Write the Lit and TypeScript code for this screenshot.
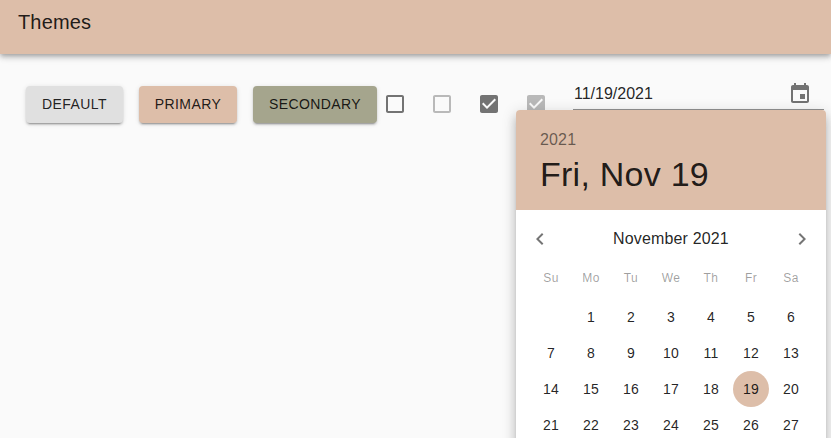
import { LitElement, html, css, svg, nothing } from "lit";
import { customElement, property } from "lit/decorators.js";

const ICONS = {
  unchecked: "M19 5v14H5V5h14m0-2H5c-1.1 0-2 .9-2 2v14c0 1.1.9 2 2 2h14c1.1 0 2-.9 2-2V5c0-1.1-.9-2-2-2z",
  checked: "M19 3H5c-1.11 0-2 .9-2 2v14c0 1.1.89 2 2 2h14c1.11 0 2-.9 2-2V5c0-1.1-.89-2-2-2zm-9 14l-5-5 1.41-1.41L10 14.17l7.59-7.59L19 8l-9 9z",
  event: "M17 12h-5v5h5v-5zM16 1v2H8V1H6v2H5c-1.11 0-1.99.9-1.99 2L3 19c0 1.1.89 2 2 2h14c1.1 0 2-.9 2-2V5c0-1.1-.9-2-2-2h-1V1h-2zm3 18H5V8h14v11z",
  left: "M15.41 16.59L10.83 12l4.58-4.59L14 6l-6 6 6 6 1.41-1.41z",
  right: "M8.59 16.59L13.17 12 8.59 7.41 10 6l6 6-6 6-1.41-1.41z",
};

const icon = (name: keyof typeof ICONS) =>
  html`<svg class="icon" viewBox="0 0 24 24">${svg`<path d=${ICONS[name]}></path>`}</svg>`;

const iconStyle = css`
  .icon {
    display: block;
    width: 24px;
    height: 24px;
    fill: currentColor;
  }
`;

@customElement("date-calendar")
class DateCalendar extends LitElement {
  @property({ type: Number }) selected = 19;

  static styles = [
    iconStyle,
    css`
      :host {
        display: block;
        width: 310px;
        overflow: hidden;
        border-radius: 4px;
        background: #fff;
        color: rgba(0, 0, 0, 0.87);
        box-shadow: 0 5px 5px -3px rgba(0, 0, 0, 0.2), 0 8px 10px 1px rgba(0, 0, 0, 0.14),
          0 3px 14px 2px rgba(0, 0, 0, 0.12);
      }
      .toolbar {
        box-sizing: border-box;
        height: 100px;
        padding: 16px 24px 0;
        background: #ddbea9;
      }
      .year {
        font-size: 16px;
        line-height: 28px;
        letter-spacing: 0.15px;
        color: rgba(0, 0, 0, 0.54);
      }
      .date {
        font-size: 34px;
        line-height: 40px;
        letter-spacing: 0.25px;
      }
      .month {
        display: flex;
        align-items: center;
        justify-content: space-between;
        height: 24px;
        margin: 17px 12px 14px;
        font-size: 16px;
        letter-spacing: 0.15px;
      }
      .month .icon {
        color: rgba(0, 0, 0, 0.54);
      }
      .grid {
        display: grid;
        grid-template-columns: repeat(7, 40px);
        justify-content: center;
        justify-items: center;
        padding-bottom: 36px;
      }
      .weekday {
        height: 34px;
        line-height: 26px;
        font-size: 12px;
        letter-spacing: 0.4px;
        color: rgba(0, 0, 0, 0.38);
      }
      .day {
        width: 36px;
        height: 36px;
        line-height: 36px;
        border-radius: 50%;
        text-align: center;
        font-size: 14px;
        letter-spacing: 0.15px;
      }
      .current {
        background: #ddbea9;
      }
    `,
  ];

  render() {
    const days = Array.from({ length: 27 }, (_, i) => i + 1);
    return html`
      <div class="toolbar">
        <div class="year">2021</div>
        <div class="date">Fri, Nov 19</div>
      </div>
      <div class="month">${icon("left")}<span>November 2021</span>${icon("right")}</div>
      <div class="grid">
        ${["Su", "Mo", "Tu", "We", "Th", "Fr", "Sa"].map((d) => html`<div class="weekday">${d}</div>`)}
        <div class="day"></div>
        ${days.map((d) => html`<div class="day ${d === this.selected ? "current" : ""}">${d}</div>`)}
      </div>
    `;
  }
}

@customElement("app-root")
class AppRoot extends LitElement {
  static styles = [
    iconStyle,
    css`
      :host {
        display: block;
        height: 438px;
        overflow: hidden;
        background: #fafafa;
        color: rgba(0, 0, 0, 0.87);
        font-family: "Liberation Sans", Arial, sans-serif;
      }
      .bar {
        box-sizing: border-box;
        height: 54px;
        padding: 6px 18px 0;
        background: #ddbea9;
        font-size: 20px;
        line-height: 32px;
        letter-spacing: 0.15px;
        box-shadow: 0 2px 4px -1px rgba(0, 0, 0, 0.2), 0 4px 5px 0 rgba(0, 0, 0, 0.14),
          0 1px 10px 0 rgba(0, 0, 0, 0.12);
      }
      .row {
        display: flex;
        align-items: flex-start;
        padding: 32px 7px 0 26px;
      }
      .buttons {
        display: flex;
        gap: 16px;
      }
      .button {
        box-sizing: border-box;
        height: 36.5px;
        padding: 6px 0;
        border: 0;
        border-radius: 4px;
        font: 14px/24.5px "Liberation Sans", Arial, sans-serif;
        letter-spacing: 0.4px;
        color: rgba(0, 0, 0, 0.87);
        text-align: center;
        width: 97px;
        background: #e0e0e0;
        box-shadow: 0 3px 1px -2px rgba(0, 0, 0, 0.2), 0 2px 2px 0 rgba(0, 0, 0, 0.14),
          0 1px 5px 0 rgba(0, 0, 0, 0.12);
      }
      .primary {
        width: 98px;
        background: #ddbea9;
      }
      .secondary {
        width: 124px;
        background: #a5a58d;
      }
      .checks {
        display: flex;
        gap: 23px;
        padding: 6px 0 0 6px;
        color: rgba(0, 0, 0, 0.54);
      }
      .disabled {
        color: rgba(0, 0, 0, 0.26);
      }
      .field {
        position: relative;
        box-sizing: border-box;
        display: flex;
        align-items: center;
        justify-content: space-between;
        width: 251px;
        height: 33px;
        margin: -9px 0 0 auto;
        padding: 2px 12px 0 1px;
        border-bottom: 1px solid rgba(0, 0, 0, 0.42);
        font-size: 16px;
      }
      .field .icon {
        color: rgba(0, 0, 0, 0.54);
      }
      .popup {
        position: absolute;
        left: -57px;
        top: 33px;
      }
    `,
  ];

  render() {
    const checks = [
      { on: false, off: false },
      { on: false, off: true },
      { on: true, off: false },
      { on: true, off: true },
    ];
    return html`
      <header class="bar">Themes</header>
      <main class="row">
        <div class="buttons">
          <button class="button">DEFAULT</button>
          <button class="button primary">PRIMARY</button>
          <button class="button secondary">SECONDARY</button>
        </div>
        <div class="checks">
          ${checks.map(
            (c) => html`<span class=${c.off ? "disabled" : nothing}>${icon(c.on ? "checked" : "unchecked")}</span>`
          )}
        </div>
        <div class="field">
          <span>11/19/2021</span>
          ${icon("event")}
          <date-calendar class="popup"></date-calendar>
        </div>
      </main>
    `;
  }
}
